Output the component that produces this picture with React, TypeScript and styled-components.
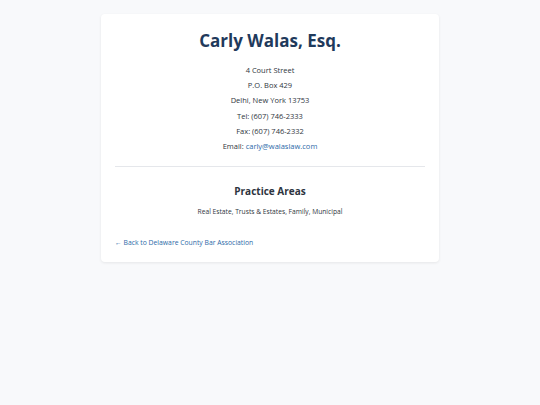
import React from 'react';
import styled, { createGlobalStyle } from 'styled-components';

const GlobalStyle = createGlobalStyle`
  html, body {
    margin: 0;
    padding: 0;
    background: #f8f9fb;
    font-family: "Open Sans", "Noto Sans", sans-serif;
  }
`;

const Page = styled.div`
  min-height: 405px;
  display: flex;
  justify-content: center;
  align-items: flex-start;
  padding-top: 14px;
  box-sizing: border-box;
`;

const Card = styled.div`
  width: 338px;
  box-sizing: border-box;
  background: #ffffff;
  border-radius: 4px;
  box-shadow: 0 1px 3px rgba(0, 0, 0, 0.08);
  padding: 15px 14px 13px;
`;

const Name = styled.h1`
  margin: 0;
  text-align: center;
  font-size: 17px;
  font-weight: 700;
  color: #1f3a5c;
  line-height: 24px;
`;

const Contact = styled.div`
  margin-top: 10px;
  text-align: center;
  font-size: 7.5px;
  line-height: 15.2px;
  color: #2f3640;
`;

const Line = styled.div``;

const Link = styled.a`
  color: #2c6aa8;
  text-decoration: none;
`;

const Divider = styled.hr`
  border: none;
  border-top: 1px solid #e5e7eb;
  margin: 12px 0 0;
`;

const SectionTitle = styled.h2`
  margin: 16px 0 0;
  text-align: center;
  font-size: 10px;
  font-weight: 700;
  color: #2d3440;
  line-height: 16px;
`;

const Areas = styled.p`
  margin: 7px 0 0;
  text-align: center;
  font-size: 6.7px;
  color: #2f3640;
  line-height: 12px;
`;

const BackLink = styled.a`
  display: block;
  margin-top: 19px;
  font-size: 6.8px;
  line-height: 12px;
  color: #2c6aa8;
  text-decoration: none;
`;

export default function App() {
  return (
    <>
      <GlobalStyle />
      <Page>
        <Card>
          <Name>Carly Walas, Esq.</Name>
          <Contact>
            <Line>4 Court Street</Line>
            <Line>P.O. Box 429</Line>
            <Line>Delhi, New York 13753</Line>
            <Line>Tel: (607) 746-2333</Line>
            <Line>Fax: (607) 746-2332</Line>
            <Line>
              Email: <Link href="#">carly@walaslaw.com</Link>
            </Line>
          </Contact>
          <Divider />
          <SectionTitle>Practice Areas</SectionTitle>
          <Areas>Real Estate, Trusts &amp; Estates, Family, Municipal</Areas>
          <BackLink href="#">← Back to Delaware County Bar Association</BackLink>
        </Card>
      </Page>
    </>
  );
}
